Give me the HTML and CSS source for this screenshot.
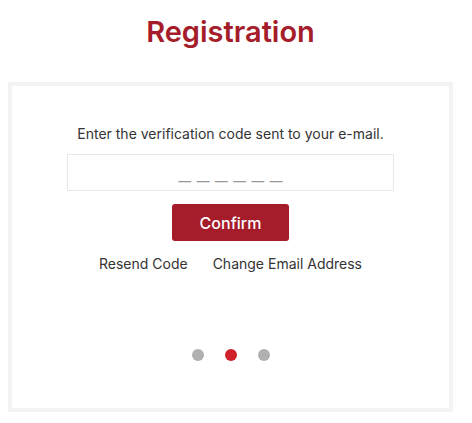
FILE: index.html
```html
<!DOCTYPE html>
<html>
<head>
    <title>Registration</title>
    <link rel="stylesheet" href="styles.css">
</head>
<body>
    <div class="page">
        <h1>Registration</h1>
        <div class="card">
            <p class="hint">Enter the verification code sent to your e-mail.</p>
            <form class="verify-form">
                <input type="text" class="code-input" placeholder="______" maxlength="6">
                <button type="submit" class="confirm-btn">Confirm</button>
            </form>
            <div class="links">
                <a href="#">Resend Code</a>
                <a href="#">Change Email Address</a>
            </div>
            <div class="steps">
                <span class="dot"></span>
                <span class="dot active"></span>
                <span class="dot"></span>
            </div>
        </div>
    </div>
</body>
</html>
```

FILE: styles.css
```css
body {
    font-family: Inter, sans-serif;
    margin: 8px;
    color: #333;
    background: #fff;
}
.page {
    width: 445px;
}
h1 {
    margin: 0;
    padding-top: 4px;
    font-size: 29px;
    font-weight: 600;
    color: #a51c2a;
    text-align: center;
    line-height: 40px;
}
.card {
    margin-top: 30px;
    height: 322px;
    border: 4px solid #f3f3f3;
    display: flex;
    flex-direction: column;
    align-items: center;
}
.hint {
    margin: 38px 0 0;
    font-size: 14px;
    line-height: 20px;
}
.verify-form {
    display: flex;
    flex-direction: column;
    align-items: center;
    gap: 13px;
    margin-top: 10px;
}
.code-input {
    width: 327px;
    height: 37px;
    box-sizing: border-box;
    border: 1px solid #e8e8e8;
    text-align: center;
    font-family: "Liberation Sans", sans-serif;
    font-size: 22px;
    letter-spacing: 6px;
    padding: 0 0 4px 6px;
    outline: none;
}
.code-input::placeholder {
    color: #999;
}
.confirm-btn {
    width: 117px;
    height: 37px;
    border: none;
    border-radius: 3px;
    background: #a51c2a;
    color: #fff;
    font-family: Inter, sans-serif;
    font-size: 16px;
    font-weight: 500;
    cursor: pointer;
}
.links {
    display: flex;
    gap: 25px;
    margin-top: 13px;
    font-size: 14px;
    line-height: 20px;
}
.links a {
    color: #333;
    text-decoration: none;
}
.steps {
    display: flex;
    gap: 21px;
    margin-top: 75px;
}
.dot {
    width: 12px;
    height: 12px;
    border-radius: 50%;
    background: #b0b0b0;
}
.dot.active {
    background: #d0202a;
}
```
